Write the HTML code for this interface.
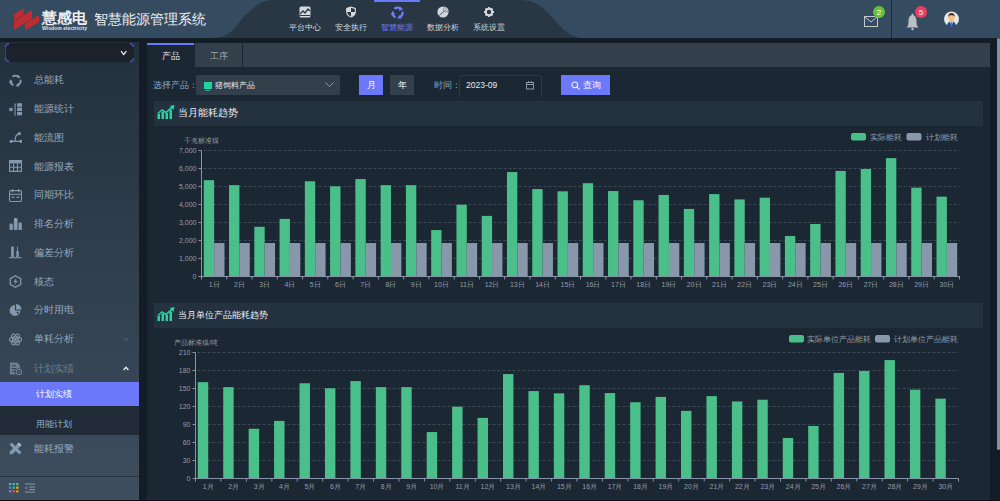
<!DOCTYPE html>
<html><head><meta charset="utf-8">
<style>
*{box-sizing:border-box;margin:0;padding:0}
html,body{width:1000px;height:501px;overflow:hidden;background:#141d26;font-family:"Liberation Sans",sans-serif;}
.abs{position:absolute}
#hdr{position:absolute;left:0;top:0;width:1000px;height:38px;background:#354b60}
#band{position:absolute;left:0;top:38px;width:1000px;height:5px;background:#141d26}
.nav{position:absolute;top:0;width:46px;height:38px;text-align:center;color:#d4d9df;font-size:8.2px}
.nav .lab{position:absolute;left:0;top:23px;width:46px;line-height:10px;white-space:nowrap}
.nav svg{position:absolute;left:17px;top:6px}
#side{position:absolute;left:0;top:42px;width:139px;height:459px;background:linear-gradient(180deg,#23303d 0%,#3e4e5f 100%)}
.mi{position:absolute;left:0;width:139px;height:20px;color:#a3b6c9;font-size:10px}
.mi .t{position:absolute;left:34px;top:0;line-height:20px;white-space:nowrap}
.mi svg{position:absolute;left:9px;top:4px}
#content{position:absolute;left:139px;top:42px;width:861px;height:459px;background:#141d27}
#panel{position:absolute;left:147px;top:43px;width:843px;height:457px;background:#1b2733}
.txt{position:absolute;white-space:nowrap}
svg text{font-family:"Liberation Sans",sans-serif}
</style></head>
<body>
<div id="hdr"></div>
<svg class="abs" style="left:0;top:0" width="1000" height="38">
  <path d="M212,38 C235,38 238,20 247,14 C256,5 262,0 275,0 L520,0 C533,0 540,5 549,14 C558,22 565,38 584,38 Z" fill="#293644"/>
  <rect x="374" y="0" width="46" height="2" fill="#6b78fa"/>
  <line x1="891.5" y1="0" x2="891.5" y2="38" stroke="#1f2b37" stroke-width="1"/>
</svg>
<!-- logo -->
<svg class="abs" style="left:0;top:0" width="45" height="36">
  <defs><pattern id="stp" patternUnits="userSpaceOnUse" width="40" height="1.6" patternTransform="rotate(-31.8)"><rect x="0" y="0" width="40" height="0.5" fill="#354b60" fill-opacity="0.55"/></pattern></defs>
  <g fill="#dc2428">
    <path d="M14,14.2 L23.5,8.3 L23.5,14.6 L14,20.5 Z"/>
    <path d="M14,21.2 L32,10 L32,18.6 L14,29.8 Z"/>
    <path d="M25,23.6 L39,14.9 L39,21.8 L25,30.6 Z"/>
  </g>
  <g fill="url(#stp)">
    <path d="M14,14.2 L23.5,8.3 L23.5,14.6 L14,20.5 Z"/>
    <path d="M14,21.2 L32,10 L32,18.6 L14,29.8 Z"/>
    <path d="M25,23.6 L39,14.9 L39,21.8 L25,30.6 Z"/>
  </g>
</svg>
<div class="txt" style="left:41.5px;top:8.6px;font-size:15px;line-height:18px;color:#eef1f4;font-weight:bold">慧感电</div>
<div class="txt" style="left:42px;top:25px;font-size:5.1px;line-height:7px;color:#dde1e5;font-weight:bold">Wisdom electricity</div>
<div class="txt" style="left:94px;top:11px;font-size:14px;line-height:16px;color:#eef1f4">智慧能源管理系统</div>

<!-- nav items -->
<div class="nav" style="left:282px"><svg width="12" height="12" viewBox="0 0 12 12"><rect x="0.5" y="0.5" width="11" height="11" rx="1.5" fill="#d6d9de"/><path d="M1,8 L4,5 L6,7 L9,3 L11,5" stroke="#2b3a48" stroke-width="1.3" fill="none"/><rect x="0.5" y="9" width="11" height="1" fill="#2b3a48"/></svg><div class="lab">平台中心</div></div>
<div class="nav" style="left:328px"><svg width="12" height="12" viewBox="0 0 12 12"><path d="M6,0.6 L10.9,2.1 L10.9,6 C10.9,8.8 8.6,10.8 6,11.6 C3.4,10.8 1.1,8.8 1.1,6 L1.1,2.1 Z" fill="#d6d9de"/><path d="M6,1.8 L9.8,3 L9.8,6 L6,6 Z" fill="#2b3a48"/><path d="M2.2,6 L6,6 L6,10.4 C4,9.7 2.2,8.2 2.2,6Z" fill="#2b3a48"/></svg><div class="lab">安全执行</div></div>
<div class="nav" style="left:374px;color:#6f7cff"><svg width="13" height="13" viewBox="0 0 12 12" style="left:16.5px;top:5.5px"><g fill="none" stroke="#6f7cff" stroke-width="2"><path d="M3.2,2.6 A4.6,4.6 0 0 1 8.6,2.4"/><path d="M10.6,5.2 A4.6,4.6 0 0 1 8.2,10.2"/><path d="M4.2,10.4 A4.6,4.6 0 0 1 1.4,6"/></g><g fill="#6f7cff"><path d="M8,0.2 L11.2,3 L7.4,4.6Z"/><path d="M10,11.8 L5.8,11.6 L7.8,8.2Z"/><path d="M-0.2,8.4 L1.6,4.4 L4,7.8Z"/></g></svg><div class="lab">智慧能源</div></div>
<div class="nav" style="left:420px"><svg width="12" height="12" viewBox="0 0 12 12"><circle cx="6" cy="6" r="5.6" fill="#d3d6db"/><path d="M2.2,9.6 L6.6,5.6 L11.6,5.6 M6.6,5.6 L7.6,0.6" stroke="#3b4654" stroke-width="0.8" fill="none"/><path d="M6.6,5.6 L7.6,0.6 A5.6,5.6 0 0 1 11.6,5.6Z" fill="#b9bec6"/></svg><div class="lab">数据分析</div></div>
<div class="nav" style="left:466px"><svg width="12" height="12" viewBox="0 0 12 12"><circle cx="6" cy="6" r="3.2" stroke="#d6d9de" stroke-width="2" fill="none"/><g stroke="#d6d9de" stroke-width="1.8"><line x1="6" y1="1" x2="6" y2="2.6"/><line x1="6" y1="9.4" x2="6" y2="11"/><line x1="1" y1="6" x2="2.6" y2="6"/><line x1="9.4" y1="6" x2="11" y2="6"/><line x1="2.5" y1="2.5" x2="3.6" y2="3.6"/><line x1="8.4" y1="8.4" x2="9.5" y2="9.5"/><line x1="2.5" y1="9.5" x2="3.6" y2="8.4"/><line x1="8.4" y1="3.6" x2="9.5" y2="2.5"/></g></svg><div class="lab">系统设置</div></div>

<!-- header right icons -->
<svg class="abs" style="left:860px;top:4px" width="110" height="28" viewBox="0 0 110 28">
  <rect x="4.5" y="12.5" width="13" height="10" fill="none" stroke="#c2c7ce" stroke-width="1"/>
  <path d="M5,13 L11,18 L17,13" fill="none" stroke="#c2c7ce" stroke-width="1"/>
  <circle cx="19" cy="8" r="6" fill="#67c23a"/>
  <text x="19" y="11" font-size="8" fill="#fff" text-anchor="middle">2</text>
  <path d="M46.3,23.5 C48,22.5 48.5,20.5 48.5,17 C48.5,13 50.5,11 52.5,11 C54.5,11 56.5,13 56.5,17 C56.5,20.5 57,22.5 58.7,23.5 Z" fill="#b9bec6"/>
  <circle cx="52.5" cy="10.5" r="1" fill="#b9bec6"/>
  <circle cx="52.5" cy="25" r="1.2" fill="#b9bec6"/>
  <circle cx="61" cy="8" r="6" fill="#ee3d5f"/>
  <text x="61" y="11" font-size="8" fill="#fff" text-anchor="middle">5</text>
  <circle cx="91.5" cy="15" r="7.5" fill="#e6e8eb"/>
  <path d="M86.8,22.5 C87,19.5 88.5,17.5 91.5,17.3 C94.5,17.5 96,19.5 96.2,22.5 C95,22.9 93,23 91.5,23 C90,23 88,22.9 86.8,22.5Z" fill="#1e4f8c"/>
  <path d="M90,17.5 L91.5,22.5 L93,17.5Z" fill="#f2f2f2"/>
  <path d="M91.1,18 L90.8,22.8 L92.2,22.8 L91.9,18Z" fill="#e03a3a"/>
  <ellipse cx="91.5" cy="13.8" rx="3.1" ry="3.4" fill="#f4bf7c"/>
  <path d="M88.3,13 C88,10 89.5,9 91.5,9 C93.5,9 95,10 94.7,13 C94.2,11.5 93,11.2 91.5,11.2 C90,11.2 88.8,11.5 88.3,13Z" fill="#4a2d1a"/>
</svg>

<!-- sidebar -->
<div id="side"></div>
<div class="abs" style="left:5px;top:43px;width:129px;height:19px;background:#1b222c;border-radius:3px"></div>
<svg class="abs" style="left:5px;top:43px" width="129" height="19"><path d="M0.6,4 A3.4,3.4 0 0 1 4,0.6 M125,0.6 A3.4,3.4 0 0 1 128.4,4 M128.4,15 A3.4,3.4 0 0 1 125,18.4 M4,18.4 A3.4,3.4 0 0 1 0.6,15" stroke="#5860d0" fill="none" stroke-width="1.1"/><path d="M0.6,4 V15" stroke="#3a4290" stroke-width="1"/><path d="M116,8.2 L118.7,11.4 L121.4,8.2" stroke="#e8ecf0" fill="none" stroke-width="1.3"/></svg>

<div class="mi" style="top:70.2px;color:#96aabe;font-size:10px"><svg width="13" height="13" viewBox="0 0 12 12" style="top:3.5px"><g fill="none" stroke="#8599ae" stroke-width="1.7"><path d="M3.2,2.6 A4.6,4.6 0 0 1 8.6,2.4"/><path d="M10.6,5.2 A4.6,4.6 0 0 1 8.2,10.2"/><path d="M4.2,10.4 A4.6,4.6 0 0 1 1.4,6"/></g><g fill="#8599ae"><path d="M8,0.6 L10.8,3 L7.6,4.2Z"/><path d="M9.8,11.6 L6.2,11.4 L7.8,8.6Z"/><path d="M0,8.2 L1.6,4.8 L3.6,7.6Z"/></g></svg><div class="t" style="left:34px">总能耗</div></div>
<div class="mi" style="top:99.0px;color:#96aabe;font-size:10px"><svg width="13" height="13" viewBox="0 0 12 12" style="top:3.5px"><rect x="0.3" y="4.5" width="3" height="3" fill="#8599ae"/><path d="M6.3,1 H5.6 V11 H6.3" stroke="#8599ae" stroke-width="1" fill="none"/><rect x="7.5" y="0.2" width="4.5" height="3.2" fill="#8599ae"/><rect x="7.5" y="4.2" width="4.5" height="3.2" fill="#8599ae"/><rect x="7.5" y="8.2" width="4.5" height="3.2" fill="#8599ae"/></svg><div class="t" style="left:34px">能源统计</div></div>
<div class="mi" style="top:127.7px;color:#96aabe;font-size:10px"><svg width="13" height="13" viewBox="0 0 12 12" style="top:3.5px"><circle cx="9.5" cy="2.5" r="1.5" fill="#8599ae"/><circle cx="2" cy="9.5" r="1.5" fill="#8599ae"/><circle cx="11" cy="9.5" r="1.5" fill="#8599ae"/><path d="M2,9.5 H11 M5.5,9.5 C5.5,5 7,3 9.5,2.5" stroke="#8599ae" stroke-width="1.1" fill="none"/></svg><div class="t" style="left:34px">能流图</div></div>
<div class="mi" style="top:156.5px;color:#96aabe;font-size:10px"><svg width="13" height="13" viewBox="0 0 12 12" style="top:3.5px"><rect x="0.5" y="0.5" width="11" height="10" fill="none" stroke="#8599ae" stroke-width="1.1"/><rect x="0.5" y="0.5" width="11" height="2.6" fill="#8599ae"/><path d="M0.5,6.7 H11.5 M4.2,0.5 V10.5 M7.8,0.5 V10.5" stroke="#8599ae" stroke-width="1"/></svg><div class="t" style="left:34px">能源报表</div></div>
<div class="mi" style="top:185.2px;color:#96aabe;font-size:10px"><svg width="13" height="13" viewBox="0 0 12 12" style="top:3.5px"><rect x="0.5" y="1.5" width="11" height="10" rx="1" fill="none" stroke="#8599ae" stroke-width="1"/><path d="M0.5,4.8 H11.5 M3.2,0 V3 M8.8,0 V3" stroke="#8599ae" stroke-width="1"/><rect x="2.6" y="7" width="2.4" height="1.2" fill="#8599ae"/><rect x="7" y="7" width="2.4" height="1.2" fill="#8599ae"/></svg><div class="t" style="left:34px">同期环比</div></div>
<div class="mi" style="top:214.0px;color:#96aabe;font-size:10px"><svg width="13" height="13" viewBox="0 0 12 12" style="top:3.5px"><rect x="0.5" y="5.2" width="3" height="5.8" fill="#8599ae"/><rect x="4.5" y="0.5" width="3.4" height="10.5" fill="#8599ae"/><rect x="8.8" y="4.2" width="3" height="6.8" fill="#8599ae"/><rect x="5.6" y="0" width="1.2" height="1.5" fill="#b4c2d0"/></svg><div class="t" style="left:34px">排名分析</div></div>
<div class="mi" style="top:242.7px;color:#96aabe;font-size:10px"><svg width="13" height="13" viewBox="0 0 12 12" style="top:3.5px"><rect x="0" y="10.3" width="11.5" height="1" fill="#8599ae"/><rect x="2" y="0.5" width="2.4" height="9.8" fill="#8599ae"/><rect x="6.8" y="4.5" width="2.2" height="5.8" fill="#8599ae"/><rect x="7.5" y="0.5" width="0.8" height="4" fill="#8599ae"/></svg><div class="t" style="left:34px">偏差分析</div></div>
<div class="mi" style="top:271.5px;color:#96aabe;font-size:10px"><svg width="13" height="13" viewBox="0 0 12 12" style="top:3.5px"><path d="M6,0.7 L10.8,3.3 L10.8,8.7 L6,11.3 L1.2,8.7 L1.2,3.3 Z" fill="none" stroke="#8599ae" stroke-width="1.2"/><path d="M6.8,2.8 L4,6.6 L6,6.6 L5.2,9.2 L8.1,5.3 L6.1,5.3 Z" fill="#8599ae"/></svg><div class="t" style="left:34px">核态</div></div>
<div class="mi" style="top:300.2px;color:#96aabe;font-size:10px"><svg width="13" height="13" viewBox="0 0 12 12" style="top:3.5px"><path d="M5.5,1 A5,5 0 1 0 10.5,6 L5.5,6 Z" fill="#8599ae"/><path d="M6.5,0 A5,5 0 0 1 11.5,5 L6.5,5Z" fill="#8599ae"/><circle cx="8" cy="8" r="1" fill="#2f3b49"/></svg><div class="t" style="left:34px">分时用电</div></div>
<div class="mi" style="top:329.0px;color:#96aabe;font-size:10px"><svg width="13" height="13" viewBox="0 0 12 12" style="top:3.5px"><g fill="none" stroke="#8599ae" stroke-width="1"><ellipse cx="6" cy="6" rx="5.6" ry="2.3"/><ellipse cx="6" cy="6" rx="5.6" ry="2.3" transform="rotate(60 6 6)"/><ellipse cx="6" cy="6" rx="5.6" ry="2.3" transform="rotate(-60 6 6)"/></g><circle cx="6" cy="6" r="1.3" fill="#8599ae"/></svg><div class="t" style="left:34px">单耗分析</div></div>
<div class="mi" style="top:358.6px;color:#717f8e;font-size:10px"><svg width="13" height="13" viewBox="0 0 12 12" style="top:3.5px"><path d="M0.8,0.5 H7.5 L10,3 V6.5 A3,3 0 0 0 6.5,11.5 H0.8 Z" fill="#6d7f93"/><path d="M2.5,3.5 H6.5 M2.5,6 H6.5 M2.5,8.5 H5" stroke="#344150" stroke-width="1"/><circle cx="9.2" cy="9.2" r="2.5" fill="none" stroke="#6d7f93" stroke-width="1.1"/><path d="M9.2,8 V9.3 H10.2" stroke="#6d7f93" stroke-width="0.8" fill="none"/></svg><div class="t" style="left:34px">计划实绩</div></div>
<svg class="abs" style="left:122.5px;top:365.5px" width="7" height="5"><path d="M0.6,4 L3,1.4 L5.4,4" stroke="#e4e8ec" stroke-width="1.4" fill="none"/></svg>
<svg class="abs" style="left:122.5px;top:336.5px" width="7" height="5"><path d="M0.8,1 L3,3.5 L5.2,1" stroke="#5b6a7c" stroke-width="1" fill="none"/></svg>
<div class="abs" style="left:0;top:382px;width:139px;height:53px;background:#222c38"></div>
<div class="abs" style="left:0;top:382px;width:139px;height:24px;background:#6b78fa"></div>
<div class="txt" style="left:36px;top:388px;font-size:9px;line-height:12px;color:#fff">计划实绩</div>
<div class="txt" style="left:36px;top:417.5px;font-size:9px;line-height:12px;color:#93b2d2">用能计划</div>
<div class="mi" style="top:438.5px;color:#96aabe;font-size:10px"><svg width="13" height="13" viewBox="0 0 12 12" style="top:3.5px"><path d="M0.5,2.5 L2.5,0.5 L11.5,9.5 L9.5,11.5 Z" fill="#8599ae"/><path d="M9,0.5 L11.5,3 L3.5,11 L0.5,11.5 L1,8.5 Z" fill="#8599ae"/><path d="M9,0.5 L11.5,3 L10.3,4.2 L7.8,1.7Z" fill="#b0bfcc"/></svg><div class="t" style="left:34px">能耗报警</div></div>
<div class="abs" style="left:0;top:476px;width:139px;height:1px;background:#2a3441"></div>
<svg class="abs" style="left:9px;top:483px" width="11" height="10"><rect x="0.0" y="0.0" width="2.2" height="2.2" fill="#3cc3a0"/><rect x="3.6" y="0.0" width="2.2" height="2.2" fill="#3fb6dc"/><rect x="7.2" y="0.0" width="2.2" height="2.2" fill="#5cc46c"/><rect x="0.0" y="3.6" width="2.2" height="2.2" fill="#3a8fe0"/><rect x="3.6" y="3.6" width="2.2" height="2.2" fill="#3fc27d"/><rect x="7.2" y="3.6" width="2.2" height="2.2" fill="#f2b322"/><rect x="0.0" y="7.2" width="2.2" height="2.2" fill="#a474d6"/><rect x="3.6" y="7.2" width="2.2" height="2.2" fill="#e2504f"/><rect x="7.2" y="7.2" width="2.2" height="2.2" fill="#f2a623"/></svg>
<svg class="abs" style="left:25px;top:483px" width="11" height="10"><path d="M0,1 H10 M4,4 H10 M4,6.5 H10 M0,9 H10" stroke="#8796a8" stroke-width="1"/><path d="M0.5,3.5 L2.5,5 L0.5,6.5Z" fill="#8796a8"/></svg>

<!-- content -->
<div id="content"></div>
<div id="panel"></div>
<!-- scrollbar -->
<div class="abs" style="left:997px;top:38px;width:3px;height:412px;background:#7a93ad;border-radius:1.5px"></div>

<!-- tabs -->
<div class="abs" style="left:194px;top:43px;width:796px;height:24px;background:#333f4b"></div>
<div class="abs" style="left:147px;top:43px;width:47px;height:2px;background:#6b78fa"></div>
<div class="abs" style="left:242px;top:43px;width:1px;height:24px;background:#1b2733"></div>
<div class="abs" style="left:194px;top:43px;width:1px;height:24px;background:#1b2733"></div>
<div class="txt" style="left:147px;top:50px;width:47px;text-align:center;font-size:9px;line-height:12px;color:#e9ecef">产品</div>
<div class="txt" style="left:195px;top:50px;width:47px;text-align:center;font-size:9px;line-height:12px;color:#9ba8b5">工序</div>

<!-- filter row -->
<div class="txt" style="left:153px;top:79px;font-size:8.5px;line-height:12px;color:#8ea6bf">选择产品：</div>
<div class="abs" style="left:196px;top:75px;width:144px;height:20px;background:#333f4b;border-radius:2px"></div>
<div class="abs" style="left:203.5px;top:82px;width:8px;height:6.5px;background:#1dd3a0"></div>
<div class="abs" style="left:205px;top:89.5px;width:5px;height:1px;background:#17a982"></div>
<div class="txt" style="left:215px;top:79px;font-size:8.3px;line-height:12px;color:#e9ecef">猪饲料产品</div>
<svg class="abs" style="left:325px;top:82px" width="9" height="6"><path d="M0.5,0.5 L4.5,4.5 L8.5,0.5" stroke="#8a96a4" fill="none" stroke-width="1"/></svg>
<div class="abs" style="left:359px;top:75px;width:24px;height:20px;background:#6b78fa"></div>
<div class="txt" style="left:359px;top:79px;width:24px;text-align:center;font-size:9px;line-height:12px;color:#fff">月</div>
<div class="abs" style="left:390px;top:75px;width:24px;height:20px;background:#333f4b"></div>
<div class="txt" style="left:390px;top:79px;width:24px;text-align:center;font-size:9px;line-height:12px;color:#fff">年</div>
<div class="txt" style="left:434px;top:79px;font-size:8.5px;line-height:12px;color:#8ea6bf">时间：</div>
<div class="abs" style="left:459px;top:75px;width:83px;height:22px;border:1px solid #2e3946;border-bottom:none;border-radius:3px 3px 0 0"></div>
<div class="txt" style="left:466px;top:79px;font-size:8.5px;line-height:12px;color:#e9ecef">2023-09</div>
<svg class="abs" style="left:525px;top:80px" width="10" height="10"><rect x="1.5" y="2.5" width="7" height="6.5" fill="none" stroke="#8a96a4" stroke-width="1"/><line x1="1.5" y1="4.5" x2="8.5" y2="4.5" stroke="#8a96a4"/><line x1="3.5" y1="1" x2="3.5" y2="3" stroke="#8a96a4"/><line x1="6.5" y1="1" x2="6.5" y2="3" stroke="#8a96a4"/></svg>
<div class="abs" style="left:561px;top:75px;width:49px;height:20px;background:#6b78fa"></div>
<svg class="abs" style="left:570.5px;top:80.5px" width="10" height="10"><circle cx="3.8" cy="3.8" r="2.9" stroke="#f4f5f7" stroke-width="1.05" fill="none"/><line x1="5.9" y1="5.9" x2="8.6" y2="8.6" stroke="#f4f5f7" stroke-width="1.1"/></svg>
<div class="txt" style="left:583px;top:79px;font-size:9px;line-height:12px;color:#fff">查询</div>

<!-- panel titles -->
<div class="abs" style="left:154px;top:101px;width:829px;height:25px;background:#24313f"></div>
<svg class="abs" style="left:157px;top:105px" width="18" height="14" viewBox="0 0 18 14"><g fill="#2ad2a2"><rect x="0.5" y="9" width="2.5" height="5"/><rect x="4.5" y="7" width="2.5" height="7"/><rect x="8.5" y="8" width="2.5" height="6"/><rect x="12.5" y="5" width="2.5" height="9"/><path d="M0.5,8 L5,4 L9,6.5 L14,2 L12.5,1 L17.5,0 L16.5,5 L15.2,3.5 L9,8.5 L5,6 L1.5,9Z"/></g></svg>
<div class="txt" style="left:178px;top:107px;font-size:10px;line-height:12px;color:#eceef1">当月能耗趋势</div>

<div class="abs" style="left:154px;top:303px;width:829px;height:25px;background:#24313f"></div>
<svg class="abs" style="left:157px;top:307px" width="18" height="14" viewBox="0 0 18 14"><g fill="#2ad2a2"><rect x="0.5" y="9" width="2.5" height="5"/><rect x="4.5" y="7" width="2.5" height="7"/><rect x="8.5" y="8" width="2.5" height="6"/><rect x="12.5" y="5" width="2.5" height="9"/><path d="M0.5,8 L5,4 L9,6.5 L14,2 L12.5,1 L17.5,0 L16.5,5 L15.2,3.5 L9,8.5 L5,6 L1.5,9Z"/></g></svg>
<div class="txt" style="left:178px;top:309px;font-size:9px;line-height:12px;color:#f0f2f4">当月单位产品能耗趋势</div>

<!-- chart 1 -->
<svg class="abs" style="left:0;top:0" width="1000" height="501" font-size="7" fill="#949eaa">
<text x="184" y="142.5">千克标准煤</text>
<rect x="851" y="133" width="15" height="7.5" rx="2" fill="#4bbf8a"/>
<text x="870" y="140" font-size="7.7">实际能耗</text>
<rect x="906.5" y="133" width="15" height="7.5" rx="2" fill="#8897aa"/>
<text x="926" y="140" font-size="7.7">计划能耗</text>
<line x1="203.5" y1="258.5" x2="959.5" y2="258.5" stroke="#3a4858" stroke-width="1" stroke-dasharray="3,2"/>
<line x1="203.5" y1="240.5" x2="959.5" y2="240.5" stroke="#3a4858" stroke-width="1" stroke-dasharray="3,2"/>
<line x1="203.5" y1="222.5" x2="959.5" y2="222.5" stroke="#3a4858" stroke-width="1" stroke-dasharray="3,2"/>
<line x1="203.5" y1="204.5" x2="959.5" y2="204.5" stroke="#3a4858" stroke-width="1" stroke-dasharray="3,2"/>
<line x1="203.5" y1="186.5" x2="959.5" y2="186.5" stroke="#3a4858" stroke-width="1" stroke-dasharray="3,2"/>
<line x1="203.5" y1="168.5" x2="959.5" y2="168.5" stroke="#3a4858" stroke-width="1" stroke-dasharray="3,2"/>
<line x1="203.5" y1="150.5" x2="959.5" y2="150.5" stroke="#3a4858" stroke-width="1" stroke-dasharray="3,2"/>
<rect x="203.77" y="180.16" width="10.36" height="96.34" fill="#4bbf8a"/>
<rect x="214.13" y="243.02" width="10.36" height="33.48" fill="#8897aa"/>
<rect x="229.04" y="185.15" width="10.36" height="91.35" fill="#4bbf8a"/>
<rect x="239.40" y="243.02" width="10.36" height="33.48" fill="#8897aa"/>
<rect x="254.31" y="226.78" width="10.36" height="49.72" fill="#4bbf8a"/>
<rect x="264.67" y="243.02" width="10.36" height="33.48" fill="#8897aa"/>
<rect x="279.57" y="218.90" width="10.36" height="57.60" fill="#4bbf8a"/>
<rect x="289.93" y="243.02" width="10.36" height="33.48" fill="#8897aa"/>
<rect x="304.84" y="181.28" width="10.36" height="95.22" fill="#4bbf8a"/>
<rect x="315.20" y="243.02" width="10.36" height="33.48" fill="#8897aa"/>
<rect x="330.11" y="186.27" width="10.36" height="90.23" fill="#4bbf8a"/>
<rect x="340.47" y="243.02" width="10.36" height="33.48" fill="#8897aa"/>
<rect x="355.37" y="179.07" width="10.36" height="97.43" fill="#4bbf8a"/>
<rect x="365.73" y="243.02" width="10.36" height="33.48" fill="#8897aa"/>
<rect x="380.64" y="185.15" width="10.36" height="91.35" fill="#4bbf8a"/>
<rect x="391.00" y="243.02" width="10.36" height="33.48" fill="#8897aa"/>
<rect x="405.91" y="185.15" width="10.36" height="91.35" fill="#4bbf8a"/>
<rect x="416.27" y="243.02" width="10.36" height="33.48" fill="#8897aa"/>
<rect x="431.17" y="230.06" width="10.36" height="46.44" fill="#4bbf8a"/>
<rect x="441.53" y="243.02" width="10.36" height="33.48" fill="#8897aa"/>
<rect x="456.44" y="204.72" width="10.36" height="71.78" fill="#4bbf8a"/>
<rect x="466.80" y="243.02" width="10.36" height="33.48" fill="#8897aa"/>
<rect x="481.71" y="215.89" width="10.36" height="60.61" fill="#4bbf8a"/>
<rect x="492.07" y="243.02" width="10.36" height="33.48" fill="#8897aa"/>
<rect x="506.97" y="172.06" width="10.36" height="104.44" fill="#4bbf8a"/>
<rect x="517.33" y="243.02" width="10.36" height="33.48" fill="#8897aa"/>
<rect x="532.24" y="189.06" width="10.36" height="87.44" fill="#4bbf8a"/>
<rect x="542.60" y="243.02" width="10.36" height="33.48" fill="#8897aa"/>
<rect x="557.51" y="191.34" width="10.36" height="85.16" fill="#4bbf8a"/>
<rect x="567.87" y="243.02" width="10.36" height="33.48" fill="#8897aa"/>
<rect x="582.77" y="183.21" width="10.36" height="93.29" fill="#4bbf8a"/>
<rect x="593.13" y="243.02" width="10.36" height="33.48" fill="#8897aa"/>
<rect x="608.04" y="191.05" width="10.36" height="85.45" fill="#4bbf8a"/>
<rect x="618.40" y="243.02" width="10.36" height="33.48" fill="#8897aa"/>
<rect x="633.31" y="200.23" width="10.36" height="76.27" fill="#4bbf8a"/>
<rect x="643.67" y="243.02" width="10.36" height="33.48" fill="#8897aa"/>
<rect x="658.57" y="194.94" width="10.36" height="81.56" fill="#4bbf8a"/>
<rect x="668.93" y="243.02" width="10.36" height="33.48" fill="#8897aa"/>
<rect x="683.84" y="208.91" width="10.36" height="67.59" fill="#4bbf8a"/>
<rect x="694.20" y="243.02" width="10.36" height="33.48" fill="#8897aa"/>
<rect x="709.11" y="194.13" width="10.36" height="82.37" fill="#4bbf8a"/>
<rect x="719.47" y="243.02" width="10.36" height="33.48" fill="#8897aa"/>
<rect x="734.37" y="199.42" width="10.36" height="77.08" fill="#4bbf8a"/>
<rect x="744.73" y="243.02" width="10.36" height="33.48" fill="#8897aa"/>
<rect x="759.64" y="197.73" width="10.36" height="78.77" fill="#4bbf8a"/>
<rect x="770.00" y="243.02" width="10.36" height="33.48" fill="#8897aa"/>
<rect x="784.91" y="235.96" width="10.36" height="40.54" fill="#4bbf8a"/>
<rect x="795.27" y="243.02" width="10.36" height="33.48" fill="#8897aa"/>
<rect x="810.17" y="223.99" width="10.36" height="52.51" fill="#4bbf8a"/>
<rect x="820.53" y="243.02" width="10.36" height="33.48" fill="#8897aa"/>
<rect x="835.44" y="170.93" width="10.36" height="105.57" fill="#4bbf8a"/>
<rect x="845.80" y="243.02" width="10.36" height="33.48" fill="#8897aa"/>
<rect x="860.71" y="168.99" width="10.36" height="107.51" fill="#4bbf8a"/>
<rect x="871.07" y="243.02" width="10.36" height="33.48" fill="#8897aa"/>
<rect x="885.97" y="158.10" width="10.36" height="118.40" fill="#4bbf8a"/>
<rect x="896.33" y="243.02" width="10.36" height="33.48" fill="#8897aa"/>
<rect x="911.24" y="187.65" width="10.36" height="88.85" fill="#4bbf8a"/>
<rect x="921.60" y="243.02" width="10.36" height="33.48" fill="#8897aa"/>
<rect x="936.51" y="196.63" width="10.36" height="79.87" fill="#4bbf8a"/>
<rect x="946.87" y="243.02" width="10.36" height="33.48" fill="#8897aa"/>
<line x1="201.5" y1="150.5" x2="201.5" y2="276.5" stroke="#8696a8" stroke-width="1"/>
<line x1="201.5" y1="276.5" x2="960.0" y2="276.5" stroke="#8696a8" stroke-width="1"/>
<line x1="198.5" y1="276.5" x2="201.5" y2="276.5" stroke="#8696a8" stroke-width="1"/>
<text x="196.5" y="279.0" text-anchor="end">0</text>
<line x1="198.5" y1="258.5" x2="201.5" y2="258.5" stroke="#8696a8" stroke-width="1"/>
<text x="196.5" y="261.0" text-anchor="end">1,000</text>
<line x1="198.5" y1="240.5" x2="201.5" y2="240.5" stroke="#8696a8" stroke-width="1"/>
<text x="196.5" y="243.0" text-anchor="end">2,000</text>
<line x1="198.5" y1="222.5" x2="201.5" y2="222.5" stroke="#8696a8" stroke-width="1"/>
<text x="196.5" y="225.0" text-anchor="end">3,000</text>
<line x1="198.5" y1="204.5" x2="201.5" y2="204.5" stroke="#8696a8" stroke-width="1"/>
<text x="196.5" y="207.0" text-anchor="end">4,000</text>
<line x1="198.5" y1="186.5" x2="201.5" y2="186.5" stroke="#8696a8" stroke-width="1"/>
<text x="196.5" y="189.0" text-anchor="end">5,000</text>
<line x1="198.5" y1="168.5" x2="201.5" y2="168.5" stroke="#8696a8" stroke-width="1"/>
<text x="196.5" y="171.0" text-anchor="end">6,000</text>
<line x1="198.5" y1="150.5" x2="201.5" y2="150.5" stroke="#8696a8" stroke-width="1"/>
<text x="196.5" y="153.0" text-anchor="end">7,000</text>
<line x1="201.5" y1="276.5" x2="201.5" y2="279.5" stroke="#8696a8" stroke-width="1"/>
<line x1="226.8" y1="276.5" x2="226.8" y2="279.5" stroke="#8696a8" stroke-width="1"/>
<line x1="252.0" y1="276.5" x2="252.0" y2="279.5" stroke="#8696a8" stroke-width="1"/>
<line x1="277.3" y1="276.5" x2="277.3" y2="279.5" stroke="#8696a8" stroke-width="1"/>
<line x1="302.6" y1="276.5" x2="302.6" y2="279.5" stroke="#8696a8" stroke-width="1"/>
<line x1="327.8" y1="276.5" x2="327.8" y2="279.5" stroke="#8696a8" stroke-width="1"/>
<line x1="353.1" y1="276.5" x2="353.1" y2="279.5" stroke="#8696a8" stroke-width="1"/>
<line x1="378.4" y1="276.5" x2="378.4" y2="279.5" stroke="#8696a8" stroke-width="1"/>
<line x1="403.6" y1="276.5" x2="403.6" y2="279.5" stroke="#8696a8" stroke-width="1"/>
<line x1="428.9" y1="276.5" x2="428.9" y2="279.5" stroke="#8696a8" stroke-width="1"/>
<line x1="454.2" y1="276.5" x2="454.2" y2="279.5" stroke="#8696a8" stroke-width="1"/>
<line x1="479.4" y1="276.5" x2="479.4" y2="279.5" stroke="#8696a8" stroke-width="1"/>
<line x1="504.7" y1="276.5" x2="504.7" y2="279.5" stroke="#8696a8" stroke-width="1"/>
<line x1="530.0" y1="276.5" x2="530.0" y2="279.5" stroke="#8696a8" stroke-width="1"/>
<line x1="555.2" y1="276.5" x2="555.2" y2="279.5" stroke="#8696a8" stroke-width="1"/>
<line x1="580.5" y1="276.5" x2="580.5" y2="279.5" stroke="#8696a8" stroke-width="1"/>
<line x1="605.8" y1="276.5" x2="605.8" y2="279.5" stroke="#8696a8" stroke-width="1"/>
<line x1="631.0" y1="276.5" x2="631.0" y2="279.5" stroke="#8696a8" stroke-width="1"/>
<line x1="656.3" y1="276.5" x2="656.3" y2="279.5" stroke="#8696a8" stroke-width="1"/>
<line x1="681.6" y1="276.5" x2="681.6" y2="279.5" stroke="#8696a8" stroke-width="1"/>
<line x1="706.8" y1="276.5" x2="706.8" y2="279.5" stroke="#8696a8" stroke-width="1"/>
<line x1="732.1" y1="276.5" x2="732.1" y2="279.5" stroke="#8696a8" stroke-width="1"/>
<line x1="757.4" y1="276.5" x2="757.4" y2="279.5" stroke="#8696a8" stroke-width="1"/>
<line x1="782.6" y1="276.5" x2="782.6" y2="279.5" stroke="#8696a8" stroke-width="1"/>
<line x1="807.9" y1="276.5" x2="807.9" y2="279.5" stroke="#8696a8" stroke-width="1"/>
<line x1="833.2" y1="276.5" x2="833.2" y2="279.5" stroke="#8696a8" stroke-width="1"/>
<line x1="858.4" y1="276.5" x2="858.4" y2="279.5" stroke="#8696a8" stroke-width="1"/>
<line x1="883.7" y1="276.5" x2="883.7" y2="279.5" stroke="#8696a8" stroke-width="1"/>
<line x1="909.0" y1="276.5" x2="909.0" y2="279.5" stroke="#8696a8" stroke-width="1"/>
<line x1="934.2" y1="276.5" x2="934.2" y2="279.5" stroke="#8696a8" stroke-width="1"/>
<line x1="959.5" y1="276.5" x2="959.5" y2="279.5" stroke="#8696a8" stroke-width="1"/>
<text x="214.1" y="287" text-anchor="middle">1日</text>
<text x="239.4" y="287" text-anchor="middle">2日</text>
<text x="264.7" y="287" text-anchor="middle">3日</text>
<text x="289.9" y="287" text-anchor="middle">4日</text>
<text x="315.2" y="287" text-anchor="middle">5日</text>
<text x="340.5" y="287" text-anchor="middle">6日</text>
<text x="365.7" y="287" text-anchor="middle">7日</text>
<text x="391.0" y="287" text-anchor="middle">8日</text>
<text x="416.3" y="287" text-anchor="middle">9日</text>
<text x="441.5" y="287" text-anchor="middle">10日</text>
<text x="466.8" y="287" text-anchor="middle">11日</text>
<text x="492.1" y="287" text-anchor="middle">12日</text>
<text x="517.3" y="287" text-anchor="middle">13日</text>
<text x="542.6" y="287" text-anchor="middle">14日</text>
<text x="567.9" y="287" text-anchor="middle">15日</text>
<text x="593.1" y="287" text-anchor="middle">16日</text>
<text x="618.4" y="287" text-anchor="middle">17日</text>
<text x="643.7" y="287" text-anchor="middle">18日</text>
<text x="668.9" y="287" text-anchor="middle">19日</text>
<text x="694.2" y="287" text-anchor="middle">20日</text>
<text x="719.5" y="287" text-anchor="middle">21日</text>
<text x="744.7" y="287" text-anchor="middle">22日</text>
<text x="770.0" y="287" text-anchor="middle">23日</text>
<text x="795.3" y="287" text-anchor="middle">24日</text>
<text x="820.5" y="287" text-anchor="middle">25日</text>
<text x="845.8" y="287" text-anchor="middle">26日</text>
<text x="871.1" y="287" text-anchor="middle">27日</text>
<text x="896.3" y="287" text-anchor="middle">28日</text>
<text x="921.6" y="287" text-anchor="middle">29日</text>
<text x="946.9" y="287" text-anchor="middle">30日</text>
<text x="174" y="345">产品标准煤/吨</text>
<rect x="789" y="335" width="15" height="7.5" rx="2" fill="#4bbf8a"/>
<text x="807" y="342" font-size="7.7">实际单位产品能耗</text>
<rect x="875" y="335" width="15" height="7.5" rx="2" fill="#8897aa"/>
<text x="894" y="342" font-size="7.7">计划单位产品能耗</text>
<line x1="197.5" y1="460.5" x2="958.5" y2="460.5" stroke="#3a4858" stroke-width="1" stroke-dasharray="3,2"/>
<line x1="197.5" y1="442.5" x2="958.5" y2="442.5" stroke="#3a4858" stroke-width="1" stroke-dasharray="3,2"/>
<line x1="197.5" y1="424.5" x2="958.5" y2="424.5" stroke="#3a4858" stroke-width="1" stroke-dasharray="3,2"/>
<line x1="197.5" y1="406.5" x2="958.5" y2="406.5" stroke="#3a4858" stroke-width="1" stroke-dasharray="3,2"/>
<line x1="197.5" y1="388.5" x2="958.5" y2="388.5" stroke="#3a4858" stroke-width="1" stroke-dasharray="3,2"/>
<line x1="197.5" y1="370.5" x2="958.5" y2="370.5" stroke="#3a4858" stroke-width="1" stroke-dasharray="3,2"/>
<line x1="197.5" y1="352.5" x2="958.5" y2="352.5" stroke="#3a4858" stroke-width="1" stroke-dasharray="3,2"/>
<rect x="197.79" y="382.15" width="10.43" height="96.35" fill="#4bbf8a"/>
<rect x="223.22" y="387.14" width="10.43" height="91.36" fill="#4bbf8a"/>
<rect x="248.66" y="428.78" width="10.43" height="49.72" fill="#4bbf8a"/>
<rect x="274.09" y="420.89" width="10.43" height="57.61" fill="#4bbf8a"/>
<rect x="299.52" y="383.27" width="10.43" height="95.23" fill="#4bbf8a"/>
<rect x="324.96" y="388.26" width="10.43" height="90.24" fill="#4bbf8a"/>
<rect x="350.39" y="381.06" width="10.43" height="97.44" fill="#4bbf8a"/>
<rect x="375.82" y="387.14" width="10.43" height="91.36" fill="#4bbf8a"/>
<rect x="401.26" y="387.14" width="10.43" height="91.36" fill="#4bbf8a"/>
<rect x="426.69" y="432.06" width="10.43" height="46.44" fill="#4bbf8a"/>
<rect x="452.12" y="406.71" width="10.43" height="71.79" fill="#4bbf8a"/>
<rect x="477.56" y="417.89" width="10.43" height="60.61" fill="#4bbf8a"/>
<rect x="502.99" y="374.05" width="10.43" height="104.45" fill="#4bbf8a"/>
<rect x="528.42" y="391.05" width="10.43" height="87.45" fill="#4bbf8a"/>
<rect x="553.86" y="393.33" width="10.43" height="85.17" fill="#4bbf8a"/>
<rect x="579.29" y="385.20" width="10.43" height="93.30" fill="#4bbf8a"/>
<rect x="604.72" y="393.05" width="10.43" height="85.45" fill="#4bbf8a"/>
<rect x="630.16" y="402.23" width="10.43" height="76.27" fill="#4bbf8a"/>
<rect x="655.59" y="396.93" width="10.43" height="81.57" fill="#4bbf8a"/>
<rect x="681.02" y="410.90" width="10.43" height="67.60" fill="#4bbf8a"/>
<rect x="706.46" y="396.12" width="10.43" height="82.38" fill="#4bbf8a"/>
<rect x="731.89" y="401.42" width="10.43" height="77.08" fill="#4bbf8a"/>
<rect x="757.32" y="399.72" width="10.43" height="78.78" fill="#4bbf8a"/>
<rect x="782.76" y="437.96" width="10.43" height="40.54" fill="#4bbf8a"/>
<rect x="808.19" y="425.99" width="10.43" height="52.51" fill="#4bbf8a"/>
<rect x="833.62" y="372.92" width="10.43" height="105.58" fill="#4bbf8a"/>
<rect x="859.06" y="370.98" width="10.43" height="107.52" fill="#4bbf8a"/>
<rect x="884.49" y="360.08" width="10.43" height="118.42" fill="#4bbf8a"/>
<rect x="909.92" y="389.64" width="10.43" height="88.86" fill="#4bbf8a"/>
<rect x="935.36" y="398.63" width="10.43" height="79.87" fill="#4bbf8a"/>
<line x1="195.5" y1="352.5" x2="195.5" y2="478.5" stroke="#8696a8" stroke-width="1"/>
<line x1="195.5" y1="478.5" x2="959.0" y2="478.5" stroke="#8696a8" stroke-width="1"/>
<line x1="192.5" y1="478.5" x2="195.5" y2="478.5" stroke="#8696a8" stroke-width="1"/>
<text x="190.5" y="481.0" text-anchor="end">0</text>
<line x1="192.5" y1="460.5" x2="195.5" y2="460.5" stroke="#8696a8" stroke-width="1"/>
<text x="190.5" y="463.0" text-anchor="end">30</text>
<line x1="192.5" y1="442.5" x2="195.5" y2="442.5" stroke="#8696a8" stroke-width="1"/>
<text x="190.5" y="445.0" text-anchor="end">60</text>
<line x1="192.5" y1="424.5" x2="195.5" y2="424.5" stroke="#8696a8" stroke-width="1"/>
<text x="190.5" y="427.0" text-anchor="end">90</text>
<line x1="192.5" y1="406.5" x2="195.5" y2="406.5" stroke="#8696a8" stroke-width="1"/>
<text x="190.5" y="409.0" text-anchor="end">120</text>
<line x1="192.5" y1="388.5" x2="195.5" y2="388.5" stroke="#8696a8" stroke-width="1"/>
<text x="190.5" y="391.0" text-anchor="end">150</text>
<line x1="192.5" y1="370.5" x2="195.5" y2="370.5" stroke="#8696a8" stroke-width="1"/>
<text x="190.5" y="373.0" text-anchor="end">180</text>
<line x1="192.5" y1="352.5" x2="195.5" y2="352.5" stroke="#8696a8" stroke-width="1"/>
<text x="190.5" y="355.0" text-anchor="end">210</text>
<line x1="195.5" y1="478.5" x2="195.5" y2="481.5" stroke="#8696a8" stroke-width="1"/>
<line x1="220.9" y1="478.5" x2="220.9" y2="481.5" stroke="#8696a8" stroke-width="1"/>
<line x1="246.4" y1="478.5" x2="246.4" y2="481.5" stroke="#8696a8" stroke-width="1"/>
<line x1="271.8" y1="478.5" x2="271.8" y2="481.5" stroke="#8696a8" stroke-width="1"/>
<line x1="297.2" y1="478.5" x2="297.2" y2="481.5" stroke="#8696a8" stroke-width="1"/>
<line x1="322.7" y1="478.5" x2="322.7" y2="481.5" stroke="#8696a8" stroke-width="1"/>
<line x1="348.1" y1="478.5" x2="348.1" y2="481.5" stroke="#8696a8" stroke-width="1"/>
<line x1="373.5" y1="478.5" x2="373.5" y2="481.5" stroke="#8696a8" stroke-width="1"/>
<line x1="399.0" y1="478.5" x2="399.0" y2="481.5" stroke="#8696a8" stroke-width="1"/>
<line x1="424.4" y1="478.5" x2="424.4" y2="481.5" stroke="#8696a8" stroke-width="1"/>
<line x1="449.8" y1="478.5" x2="449.8" y2="481.5" stroke="#8696a8" stroke-width="1"/>
<line x1="475.3" y1="478.5" x2="475.3" y2="481.5" stroke="#8696a8" stroke-width="1"/>
<line x1="500.7" y1="478.5" x2="500.7" y2="481.5" stroke="#8696a8" stroke-width="1"/>
<line x1="526.1" y1="478.5" x2="526.1" y2="481.5" stroke="#8696a8" stroke-width="1"/>
<line x1="551.6" y1="478.5" x2="551.6" y2="481.5" stroke="#8696a8" stroke-width="1"/>
<line x1="577.0" y1="478.5" x2="577.0" y2="481.5" stroke="#8696a8" stroke-width="1"/>
<line x1="602.4" y1="478.5" x2="602.4" y2="481.5" stroke="#8696a8" stroke-width="1"/>
<line x1="627.9" y1="478.5" x2="627.9" y2="481.5" stroke="#8696a8" stroke-width="1"/>
<line x1="653.3" y1="478.5" x2="653.3" y2="481.5" stroke="#8696a8" stroke-width="1"/>
<line x1="678.7" y1="478.5" x2="678.7" y2="481.5" stroke="#8696a8" stroke-width="1"/>
<line x1="704.2" y1="478.5" x2="704.2" y2="481.5" stroke="#8696a8" stroke-width="1"/>
<line x1="729.6" y1="478.5" x2="729.6" y2="481.5" stroke="#8696a8" stroke-width="1"/>
<line x1="755.0" y1="478.5" x2="755.0" y2="481.5" stroke="#8696a8" stroke-width="1"/>
<line x1="780.5" y1="478.5" x2="780.5" y2="481.5" stroke="#8696a8" stroke-width="1"/>
<line x1="805.9" y1="478.5" x2="805.9" y2="481.5" stroke="#8696a8" stroke-width="1"/>
<line x1="831.3" y1="478.5" x2="831.3" y2="481.5" stroke="#8696a8" stroke-width="1"/>
<line x1="856.8" y1="478.5" x2="856.8" y2="481.5" stroke="#8696a8" stroke-width="1"/>
<line x1="882.2" y1="478.5" x2="882.2" y2="481.5" stroke="#8696a8" stroke-width="1"/>
<line x1="907.6" y1="478.5" x2="907.6" y2="481.5" stroke="#8696a8" stroke-width="1"/>
<line x1="933.1" y1="478.5" x2="933.1" y2="481.5" stroke="#8696a8" stroke-width="1"/>
<line x1="958.5" y1="478.5" x2="958.5" y2="481.5" stroke="#8696a8" stroke-width="1"/>
<text x="208.2" y="489" text-anchor="middle">1月</text>
<text x="233.7" y="489" text-anchor="middle">2月</text>
<text x="259.1" y="489" text-anchor="middle">3月</text>
<text x="284.5" y="489" text-anchor="middle">4月</text>
<text x="309.9" y="489" text-anchor="middle">5月</text>
<text x="335.4" y="489" text-anchor="middle">6月</text>
<text x="360.8" y="489" text-anchor="middle">7月</text>
<text x="386.2" y="489" text-anchor="middle">8月</text>
<text x="411.7" y="489" text-anchor="middle">9月</text>
<text x="437.1" y="489" text-anchor="middle">10月</text>
<text x="462.6" y="489" text-anchor="middle">11月</text>
<text x="488.0" y="489" text-anchor="middle">12月</text>
<text x="513.4" y="489" text-anchor="middle">13月</text>
<text x="538.9" y="489" text-anchor="middle">14月</text>
<text x="564.3" y="489" text-anchor="middle">15月</text>
<text x="589.7" y="489" text-anchor="middle">16月</text>
<text x="615.1" y="489" text-anchor="middle">17月</text>
<text x="640.6" y="489" text-anchor="middle">18月</text>
<text x="666.0" y="489" text-anchor="middle">19月</text>
<text x="691.5" y="489" text-anchor="middle">20月</text>
<text x="716.9" y="489" text-anchor="middle">21月</text>
<text x="742.3" y="489" text-anchor="middle">22月</text>
<text x="767.8" y="489" text-anchor="middle">23月</text>
<text x="793.2" y="489" text-anchor="middle">24月</text>
<text x="818.6" y="489" text-anchor="middle">25月</text>
<text x="844.0" y="489" text-anchor="middle">26月</text>
<text x="869.5" y="489" text-anchor="middle">27月</text>
<text x="894.9" y="489" text-anchor="middle">28月</text>
<text x="920.4" y="489" text-anchor="middle">29月</text>
<text x="945.8" y="489" text-anchor="middle">30月</text>
</svg>
<div class="abs" style="left:0;top:500px;width:1000px;height:1px;background:#0b1016"></div>
</body></html>
